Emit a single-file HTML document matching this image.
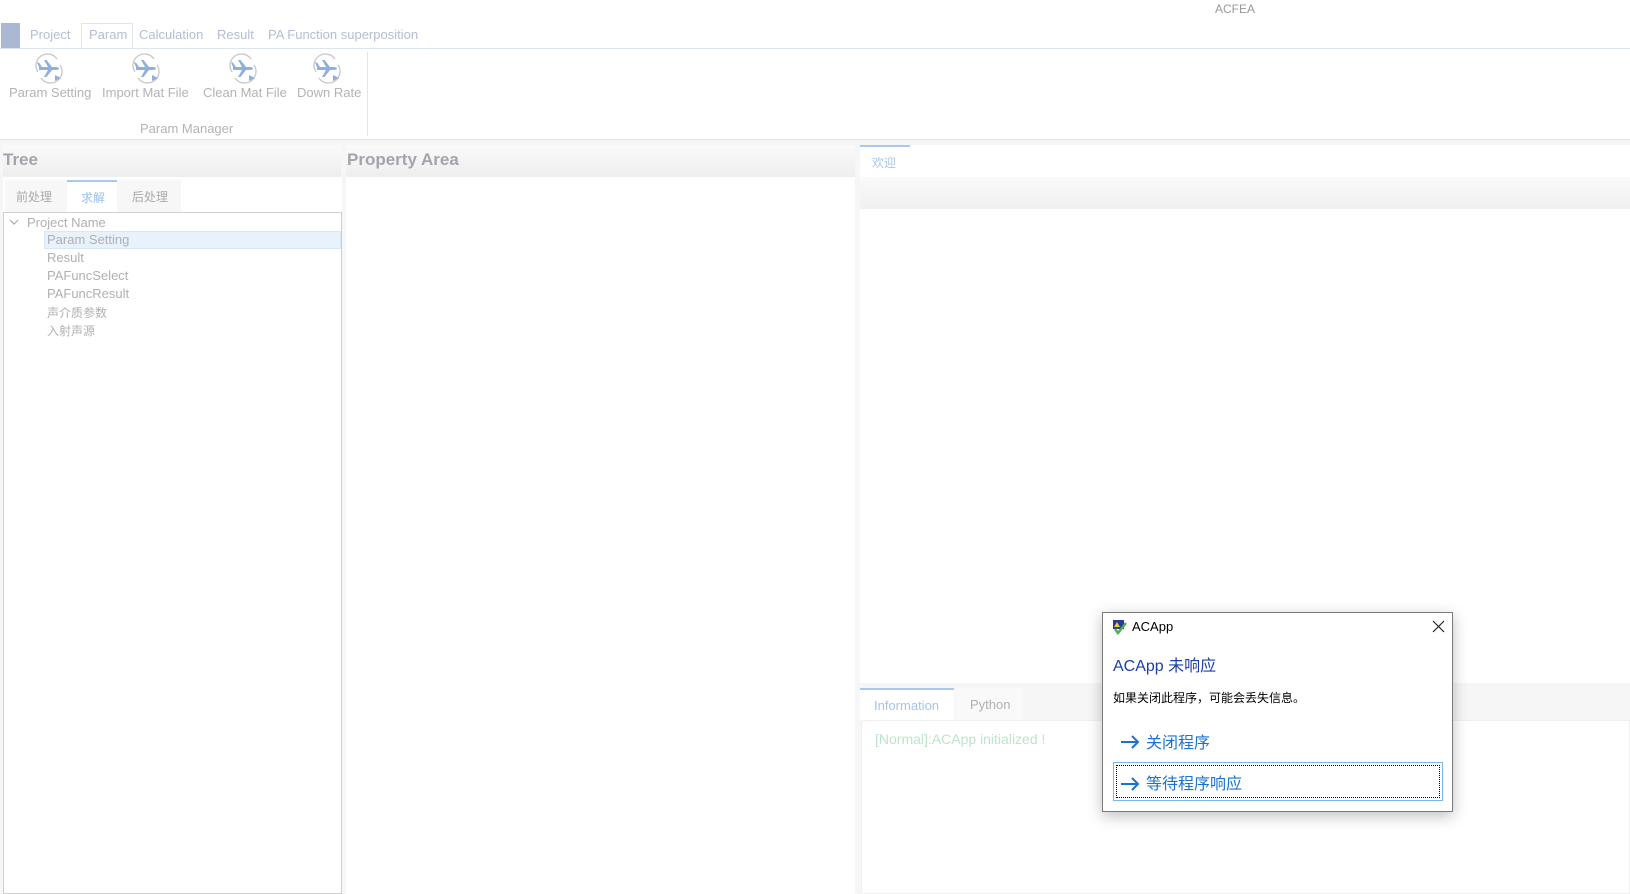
<!DOCTYPE html>
<html><head><meta charset="utf-8"><style>
*{margin:0;padding:0;box-sizing:border-box}
body{width:1630px;height:894px;overflow:hidden;background:#fff;position:relative;font-family:"Liberation Sans","Noto Sans CJK SC",sans-serif;}
.a{position:absolute;white-space:nowrap}
.tab{color:#b4bdd2;font-size:13px}
.rl{color:#b3b3b8;font-size:13px}
.tr{color:#b0b0b4;font-size:13px;left:47px}
svg.ic{position:absolute;width:32px;height:32px}
</style></head><body>
<div class="a" style="left:1215px;top:2px;font-size:12px;color:#999">ACFEA</div>
<div class="a" style="left:1px;top:23px;width:19px;height:25px;background:#aab8d4"></div>
<div class="a" style="left:81px;top:23px;width:52px;height:26px;border:1px solid #dde6f0;border-bottom:none;background:#fff"></div>
<div class="a tab" style="left:30px;top:27px">Project</div>
<div class="a tab" style="left:89px;top:27px">Param</div>
<div class="a tab" style="left:139px;top:27px">Calculation</div>
<div class="a tab" style="left:217px;top:27px">Result</div>
<div class="a tab" style="left:268px;top:27px">PA Function superposition</div>
<div class="a" style="left:0;top:48px;width:1630px;height:1px;background:#dde6ef"></div>
<div class="a" style="left:367px;top:52px;width:1px;height:84px;background:#e4e4e4"></div>
<div class="a" style="left:0;top:139px;width:1630px;height:1px;background:#e2e6ec"></div>
<svg width="0" height="0" style="position:absolute"><defs><g id="ic"><path d="M5 20 A11 11 0 0 1 24 7" fill="none" stroke="#c8c8c8" stroke-width="1.3"/><path d="M27 13 A11 11 0 0 1 8 26" fill="none" stroke="#c8c8c8" stroke-width="1.3"/><path d="M6 15 L22 15 Q26 15 26 16.5 Q26 18 22 18 L6 18z M15 15 L11 8 L13.5 8 L19 15z M15 18 L11 25 L13.5 25 L19 18z M6 15 L4 10.5 L6 10.5 L9 15z" fill="#8fb0dc"/><path d="M22 23 l6 3 l-6 3z" fill="#8fb0dc"/></g></defs></svg>
<svg class="ic" style="left:33px;top:52px" viewBox="0 0 32 32"><use href="#ic"/></svg>
<svg class="ic" style="left:130px;top:52px" viewBox="0 0 32 32"><use href="#ic"/></svg>
<svg class="ic" style="left:227px;top:52px" viewBox="0 0 32 32"><use href="#ic"/></svg>
<svg class="ic" style="left:311px;top:52px" viewBox="0 0 32 32"><use href="#ic"/></svg>
<div class="a rl" style="left:9px;top:85px">Param Setting</div>
<div class="a rl" style="left:102px;top:85px">Import Mat File</div>
<div class="a rl" style="left:203px;top:85px">Clean Mat File</div>
<div class="a rl" style="left:297px;top:85px">Down Rate</div>
<div class="a rl" style="left:140px;top:121px">Param Manager</div>

<div class="a" style="left:0;top:140px;width:1630px;height:754px;background:#f6f6f6"></div>
<div class="a" style="left:3px;top:145px;width:338px;height:32px;background:linear-gradient(#fafafa,#eeeeee)"></div>
<div class="a" style="left:3px;top:150px;font-size:17px;font-weight:bold;color:#a4a4ac">Tree</div>
<div class="a" style="left:3px;top:177px;width:339px;height:717px;background:#fff"></div>
<div class="a" style="left:5px;top:180px;width:176px;height:32px;background:#f7f7f7"></div>
<div class="a" style="left:67px;top:180px;width:50px;height:32px;background:#fff;border-top:2px solid #a8c8ec"></div>
<div class="a" style="left:16px;top:188px;font-size:12px;color:#aaa">前处理</div>
<div class="a" style="left:81px;top:189px;font-size:12px;color:#9cc0ec">求解</div>
<div class="a" style="left:132px;top:188px;font-size:12px;color:#aaa">后处理</div>
<div class="a" style="left:3px;top:212px;width:339px;height:682px;border:1px solid #cfcfcf;background:#fff"></div>
<div class="a" style="left:44px;top:231px;width:297px;height:18px;background:#e8f2fc;border:1px solid #d6e8f8"></div>
<svg class="a" style="left:9px;top:218px" width="10" height="8" viewBox="0 0 10 8"><path d="M1 2L5 6L9 2" fill="none" stroke="#aaa" stroke-width="1.2"/></svg>
<div class="a" style="left:27px;top:215px;font-size:13px;color:#b0b0b4">Project Name</div>
<div class="a tr" style="top:232px">Param Setting</div>
<div class="a tr" style="top:250px">Result</div>
<div class="a tr" style="top:268px">PAFuncSelect</div>
<div class="a tr" style="top:286px">PAFuncResult</div>
<div class="a tr" style="top:304px;font-size:12px">声介质参数</div>
<div class="a tr" style="top:322px;font-size:12px">入射声源</div>

<div class="a" style="left:346px;top:145px;width:509px;height:32px;background:linear-gradient(#fafafa,#eeeeee)"></div>
<div class="a" style="left:347px;top:150px;font-size:17px;font-weight:bold;color:#a4a4ac">Property Area</div>
<div class="a" style="left:346px;top:177px;width:509px;height:717px;background:#fff"></div>

<div class="a" style="left:860px;top:145px;width:770px;height:538px;background:#fff"></div>
<div class="a" style="left:860px;top:145px;width:50px;height:2px;background:#a8c8ec"></div>
<div class="a" style="left:872px;top:154px;font-size:12px;color:#a8c8ec">欢迎</div>
<div class="a" style="left:860px;top:177px;width:770px;height:32px;background:linear-gradient(#fafafa,#f0f0f0)"></div>
<div class="a" style="left:860px;top:688px;width:94px;height:32px;background:#fff;border-top:2px solid #a8c8ec"></div>
<div class="a" style="left:955px;top:688px;width:68px;height:32px;background:#f9f9f9"></div>
<div class="a" style="left:874px;top:698px;font-size:13px;color:#a8c4e8">Information</div>
<div class="a" style="left:970px;top:697px;font-size:13px;color:#b0b0b0">Python</div>
<div class="a" style="left:861px;top:720px;width:769px;height:174px;background:#fff;border:1px solid #f0f0f0;border-radius:4px 0 0 0"></div>
<div class="a" style="left:875px;top:731px;font-size:14px;color:#bde4cc">[Normal]:ACApp initialized !</div>

<div class="a" style="left:1102px;top:612px;width:351px;height:200px;background:#fff;border:1px solid #7a7a7a;box-shadow:0 4px 14px rgba(0,0,0,.25)"></div>
<svg class="a" style="left:1112px;top:619px" width="16" height="16" viewBox="0 0 16 16"><rect x="1" y="1" width="11" height="9" fill="#2a3a9c"/><path d="M5 3l3 5h-6z" fill="#f0d020"/><path d="M3 10l3 4l8-10" fill="none" stroke="#4caf50" stroke-width="2.5"/></svg>
<div class="a" style="left:1132px;top:619px;font-size:13px;color:#000">ACApp</div>
<svg class="a" style="left:1432px;top:620px" width="13" height="13" viewBox="0 0 13 13"><path d="M1 1L12 12M12 1L1 12" stroke="#222" stroke-width="1.2"/></svg>
<div class="a" style="left:1113px;top:652px;font-size:16px;color:#1a3fa6">ACApp 未响应</div>
<div class="a" style="left:1113px;top:689px;font-size:12px;color:#000">如果关闭此程序，可能会丢失信息。</div>
<svg class="a" style="left:1120px;top:735px" width="20" height="14" viewBox="0 0 20 14"><path d="M1 7H18M12 1L18 7L12 13" fill="none" stroke="#1a73d0" stroke-width="2"/></svg>
<div class="a" style="left:1146px;top:729px;font-size:16px;color:#1a73d0">关闭程序</div>
<div class="a" style="left:1113px;top:762px;width:330px;height:39px;border:1px solid #7ab8ec"></div>
<div class="a" style="left:1116px;top:765px;width:324px;height:33px;border:1px dotted #000"></div>
<svg class="a" style="left:1120px;top:777px" width="20" height="14" viewBox="0 0 20 14"><path d="M1 7H18M12 1L18 7L12 13" fill="none" stroke="#1a73d0" stroke-width="2"/></svg>
<div class="a" style="left:1146px;top:770px;font-size:16px;color:#1a73d0">等待程序响应</div>
</body></html>
